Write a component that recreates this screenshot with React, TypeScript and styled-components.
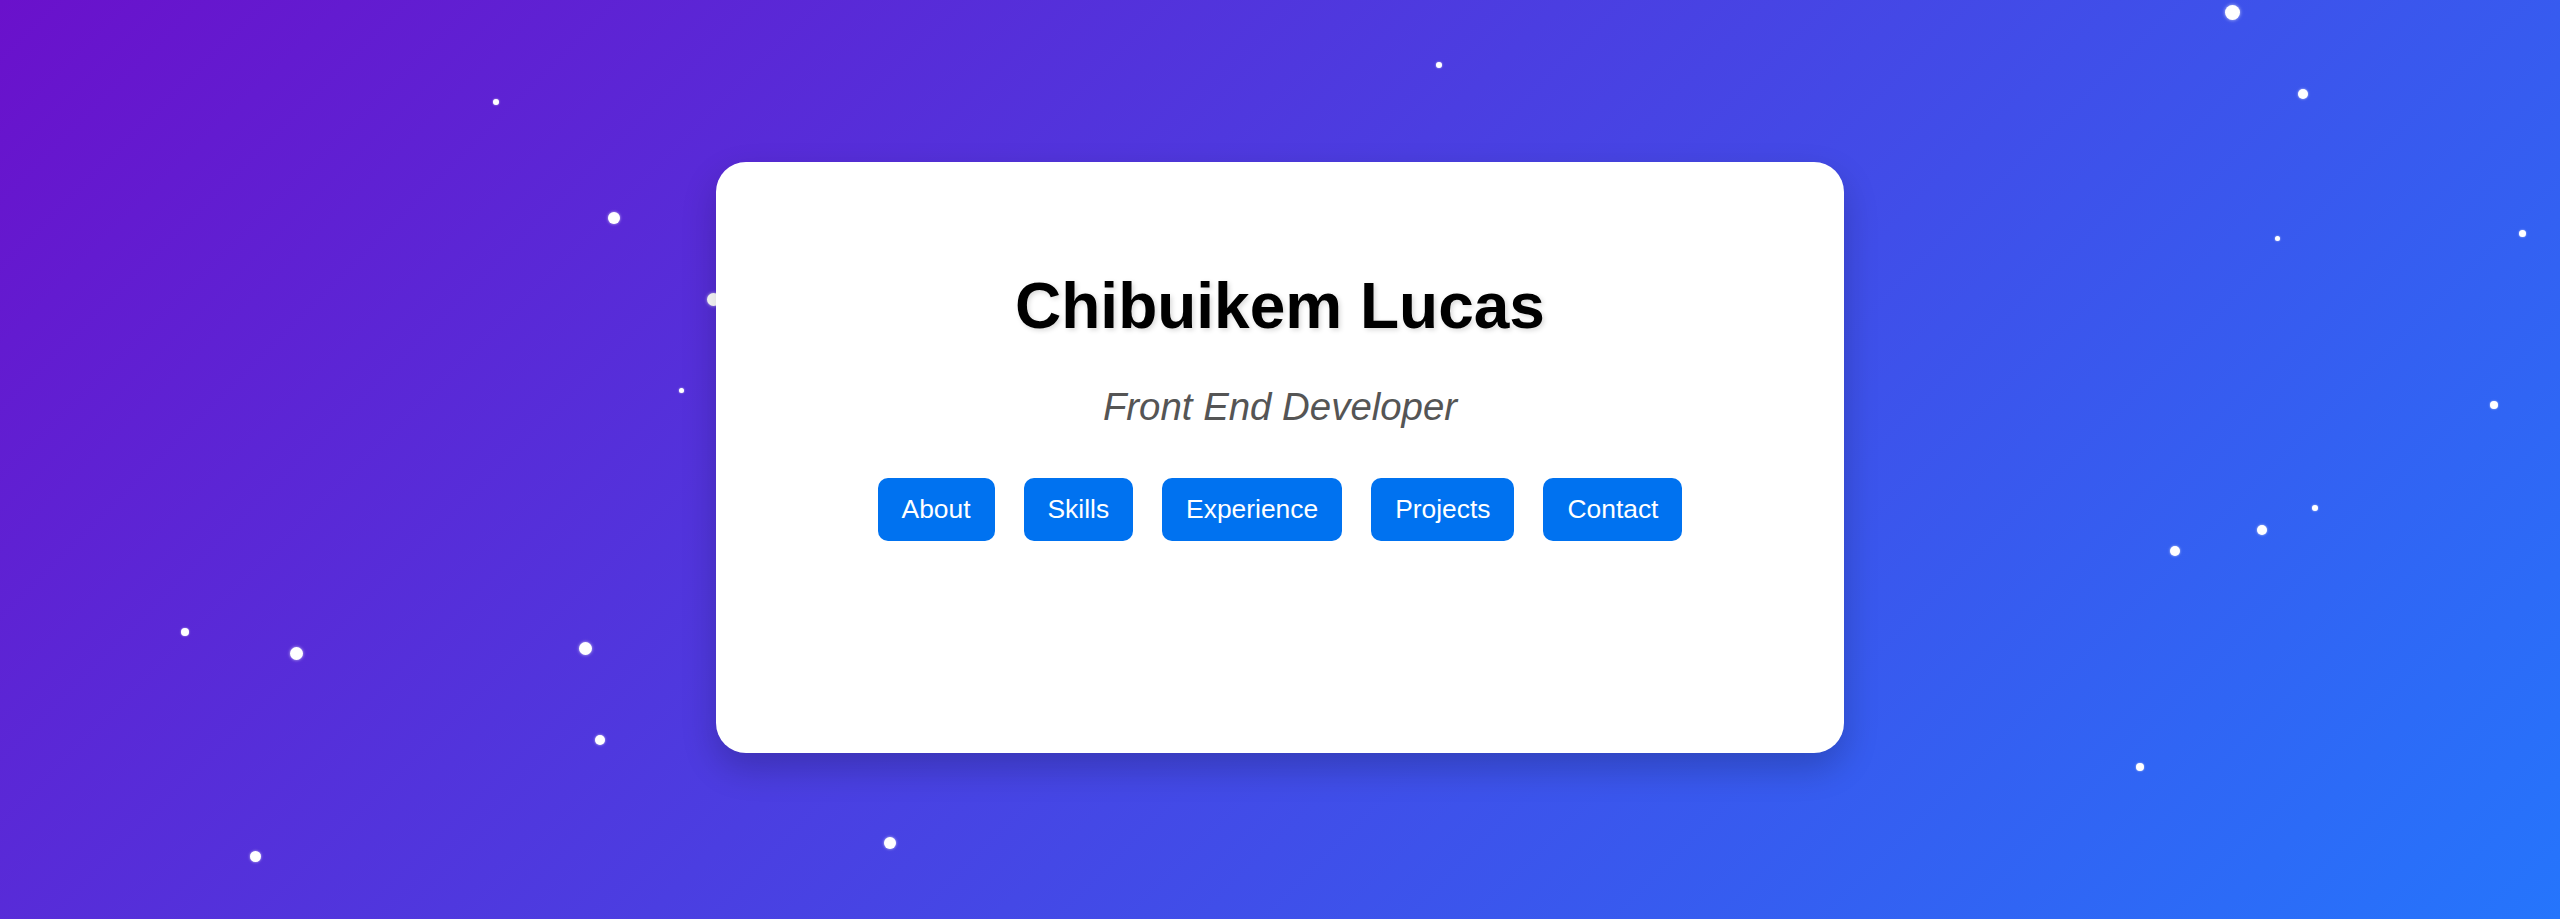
import React from "react";
import styled, { createGlobalStyle } from "styled-components";

const GlobalStyle = createGlobalStyle`
  html, body {
    margin: 0;
    padding: 0;
  }
  body {
    font-family: "Liberation Sans", Arial, sans-serif;
  }
`;

const Page = styled.main`
  position: relative;
  box-sizing: border-box;
  min-height: 100vh;
  padding-bottom: 4px;
  display: flex;
  align-items: center;
  justify-content: center;
  overflow: hidden;
  background: linear-gradient(135deg, #6a11cb 0%, #2575fc 100%);
`;

const Star = styled.span<{ $x: number; $y: number; $d: number }>`
  position: absolute;
  left: ${(p) => p.$x - p.$d / 2}px;
  top: ${(p) => p.$y - p.$d / 2}px;
  width: ${(p) => p.$d}px;
  height: ${(p) => p.$d}px;
  border-radius: 50%;
  background: #ffffff;
  box-shadow: 0 0 ${(p) => Math.max(2, p.$d / 4)}px rgba(255, 255, 255, 0.7);
`;

const Card = styled.section`
  position: relative;
  z-index: 1;
  box-sizing: border-box;
  width: 1128px;
  height: 591px;
  padding-top: 107px;
  display: flex;
  flex-direction: column;
  align-items: center;
  background: #ffffff;
  border-radius: 30px;
  box-shadow: 0 15px 35px rgba(0, 0, 0, 0.2);
`;

const Title = styled.h1`
  margin: 0;
  font-family: "Liberation Sans", Arial, sans-serif;
  font-size: 64px;
  font-weight: 700;
  color: #000000;
  text-shadow: 2px 2px 5px rgba(0, 0, 0, 0.15);
`;

const Subtitle = styled.p`
  margin: 42px 0 0;
  font-family: "Liberation Sans", Arial, sans-serif;
  font-size: 38.4px;
  font-style: italic;
  color: #555555;
`;

const Nav = styled.nav`
  margin-top: 49px;
  display: flex;
  gap: 29px;
`;

const NavButton = styled.button`
  border: none;
  border-radius: 10px;
  padding: 16px 24px;
  background: #0072f0;
  color: #ffffff;
  font-family: "Liberation Sans", Arial, sans-serif;
  font-size: 26.4px;
  line-height: normal;
  cursor: pointer;
`;

const stars: [number, number, number][] = [
  [2232, 12, 15],
  [2303, 94, 10],
  [2277, 238, 5],
  [2522, 233, 7],
  [2494, 405, 8],
  [1439, 65, 6],
  [496, 102, 6],
  [614, 218, 12],
  [713, 299, 13],
  [681, 390, 5],
  [185, 632, 8],
  [296, 653, 13],
  [585, 648, 13],
  [600, 740, 10],
  [255, 856, 11],
  [890, 843, 12],
  [2175, 551, 10],
  [2262, 530, 10],
  [2315, 508, 6],
  [2140, 767, 8],
];

const links = ["About", "Skills", "Experience", "Projects", "Contact"];

export default function App() {
  return (
    <>
      <GlobalStyle />
      <Page>
        {stars.map(([x, y, d], i) => (
          <Star key={i} $x={x} $y={y} $d={d} />
        ))}
        <Card>
          <Title>Chibuikem Lucas</Title>
          <Subtitle>Front End Developer</Subtitle>
          <Nav>
            {links.map((l) => (
              <NavButton key={l}>{l}</NavButton>
            ))}
          </Nav>
        </Card>
      </Page>
    </>
  );
}
